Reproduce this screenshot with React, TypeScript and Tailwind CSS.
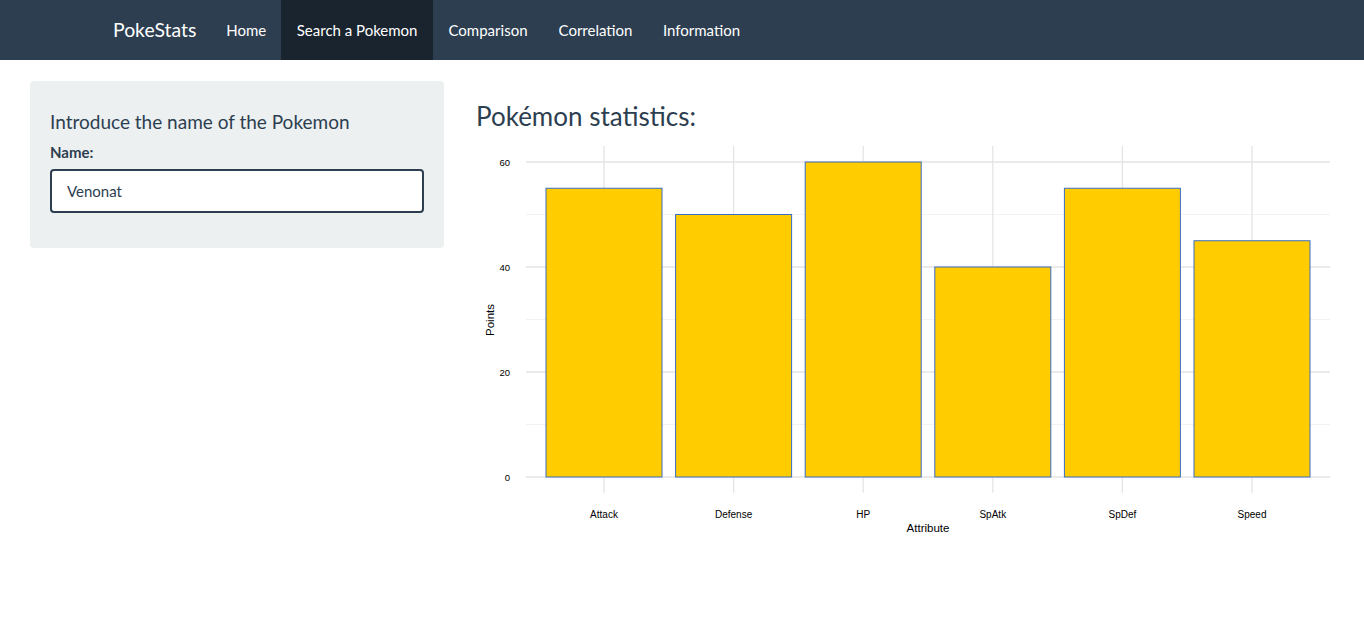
const stats = [
  { name: "Attack", value: 55 },
  { name: "Defense", value: 50 },
  { name: "HP", value: 60 },
  { name: "SpAtk", value: 40 },
  { name: "SpDef", value: 55 },
  { name: "Speed", value: 45 },
];

// plot geometry (svg coords)
const left = 50;
const right = 854;
const top = 5;
const bottom = 351.75;
const step = 129.6;
const firstX = 128;
const zeroY = 336;
const unit = 5.25;

function Chart() {
  return (
    <svg width="872" height="400" className="block" style={{ fontFamily: '"Liberation Sans", Arial, sans-serif' }}>
      {[10, 30, 50].map((v) => (
        <line key={v} x1={left} x2={right} y1={zeroY - v * unit} y2={zeroY - v * unit} stroke="#f3f3f3" strokeWidth="1" />
      ))}
      {[0, 20, 40, 60].map((v) => (
        <line key={v} x1={left} x2={right} y1={zeroY - v * unit} y2={zeroY - v * unit} stroke="#e4e4e4" strokeWidth="1.3" />
      ))}
      {stats.map((s, i) => (
        <line key={s.name} x1={firstX + i * step} x2={firstX + i * step} y1={top} y2={bottom} stroke="#e4e4e4" strokeWidth="1.3" />
      ))}
      {stats.map((s, i) => {
        const cx = firstX + i * step;
        const h = s.value * unit;
        return (
          <rect
            key={s.name}
            x={cx - 58}
            y={zeroY - h}
            width={116}
            height={h}
            fill="#ffcc00"
            stroke="#3a6dc2"
            strokeWidth="1"
          />
        );
      })}
      {[0, 20, 40, 60].map((v) => (
        <text key={v} x={34} y={zeroY - v * unit + 3.5} textAnchor="end" fontSize="9.5" fill="#000">
          {v}
        </text>
      ))}
      {stats.map((s, i) => (
        <text key={s.name} x={firstX + i * step} y={377} textAnchor="middle" fontSize="10" fill="#000">
          {s.name}
        </text>
      ))}
      <text x={452} y={391} textAnchor="middle" fontSize="11.5" fill="#000">
        Attribute
      </text>
      <text x={18} y={179} textAnchor="middle" fontSize="11.5" fill="#000" transform="rotate(-90 18 179)">
        Points
      </text>
    </svg>
  );
}

export default function App() {
  return (
    <div className="min-h-screen bg-white text-[15px] text-[#2c3e50]" style={{ fontFamily: 'Lato, "Noto Sans", sans-serif' }}>
      <nav className="h-[60px] bg-[#2c3e50] flex pl-[98px] text-white text-[15px]">
        <div className="px-[15px] flex items-center text-[19.4px]">PokeStats</div>
        <a className="px-[15px] flex items-center">Home</a>
        <a className="px-[15.5px] flex items-center bg-[#1a242f]">Search a Pokemon</a>
        <a className="px-[15.5px] flex items-center">Comparison</a>
        <a className="px-[15.5px] flex items-center">Correlation</a>
        <a className="px-[15px] flex items-center">Information</a>
      </nav>
      <div className="flex pt-[21px] pl-[30px]">
        <div className="w-[414px] h-[167px] bg-[#ecf0f1] rounded px-[20px] pt-[31px]">
          <h4 className="text-[19px] leading-[1.1] mb-[8px]">Introduce the name of the Pokemon</h4>
          <label className="block font-bold mb-[6px]">Name:</label>
          <div className="h-[44px] bg-white border-2 border-[#2c3e50] rounded-[4px] flex items-center px-[15px]">Venonat</div>
        </div>
        <div className="ml-[32px]">
          <h3 className="text-[26px] leading-[1.1] mt-[21px] mb-[10px]">Pokémon statistics:</h3>
          <Chart />
        </div>
      </div>
    </div>
  );
}
